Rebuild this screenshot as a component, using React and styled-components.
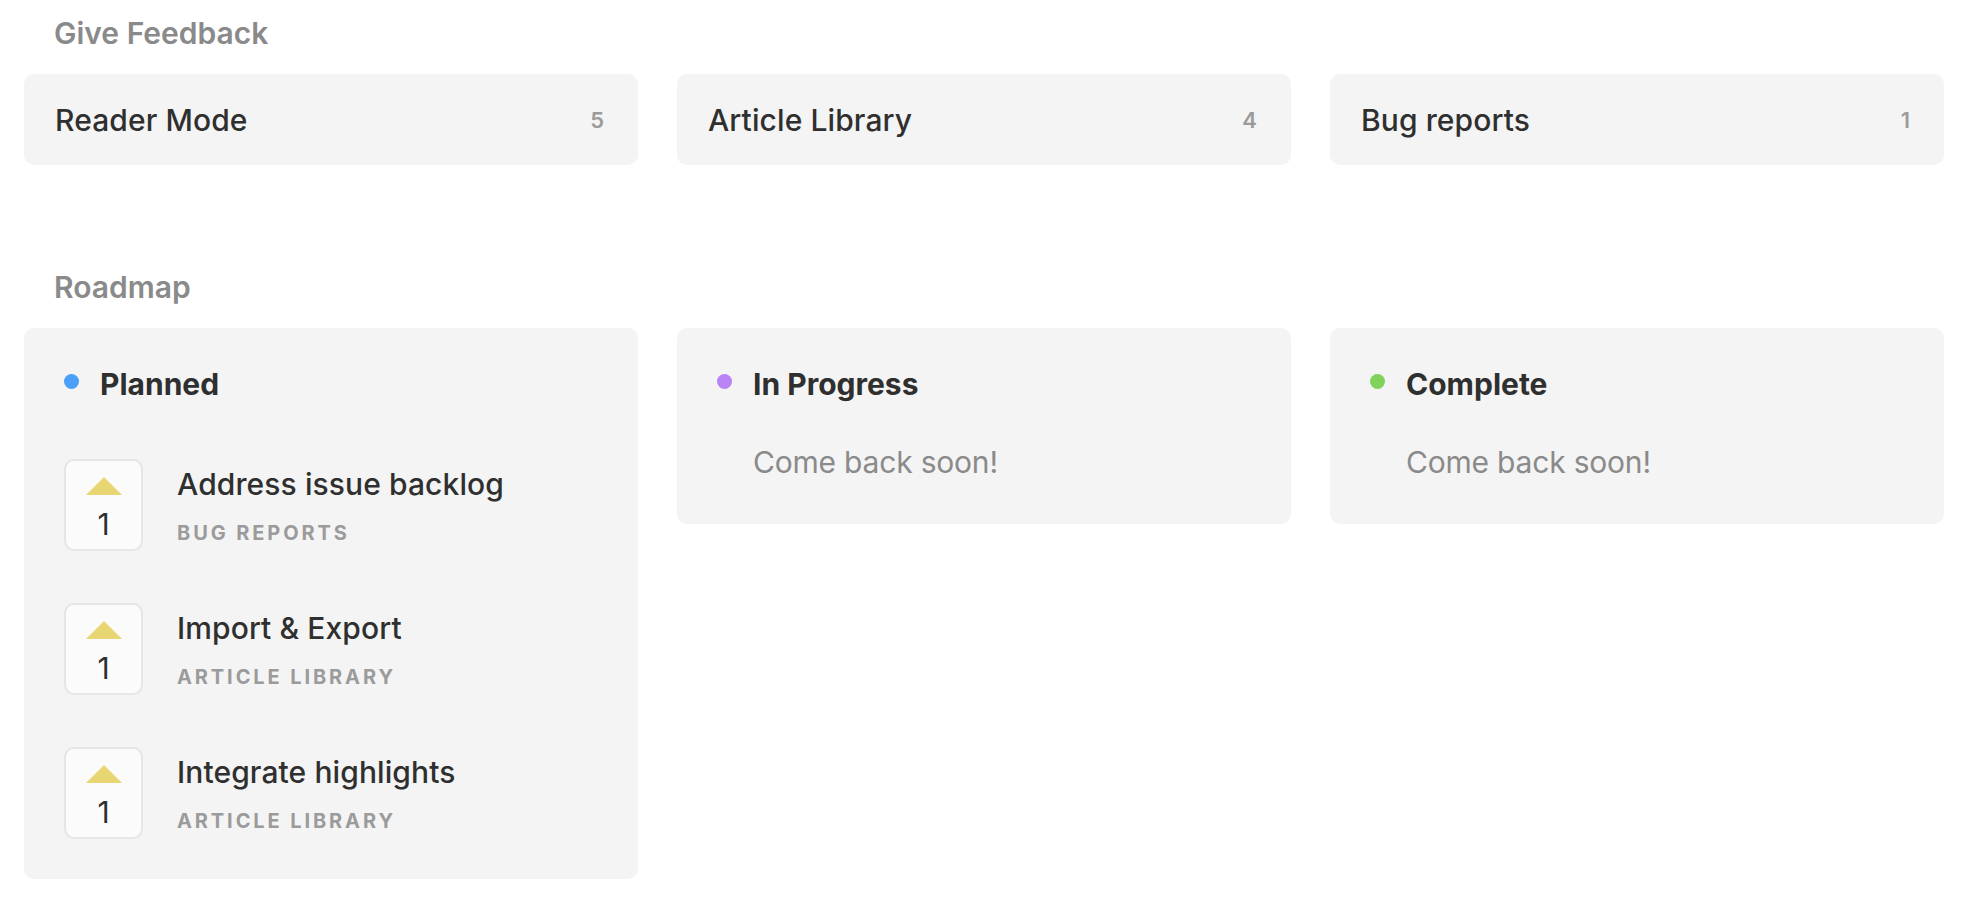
import React from 'react'
import styled, { createGlobalStyle } from 'styled-components'

const GlobalStyle = createGlobalStyle`
  body {
    margin: 0;
    background: #ffffff;
    font-family: Inter, 'Noto Sans', sans-serif;
    -webkit-font-smoothing: antialiased;
  }
`

const Page = styled.div`
  padding: 15px 36px 30px 24px;
`

const Section = styled.section`
  display: flex;
  flex-direction: column;
  & + & {
    margin-top: 104px;
  }
`

const SectionTitle = styled.h2`
  margin: 0 0 23px 30px;
  font-size: 30px;
  line-height: 36px;
  font-weight: 600;
  color: #8a8a8a;
`

const Columns = styled.div`
  display: grid;
  grid-template-columns: repeat(3, 1fr);
  column-gap: 39px;
  align-items: start;
`

const BoardCard = styled.div`
  height: 91px;
  padding: 0 34px 0 31px;
  display: flex;
  align-items: center;
  justify-content: space-between;
  background: #f4f4f4;
  border-radius: 10px;
`

const BoardName = styled.span`
  font-size: 30px;
  font-weight: 500;
  letter-spacing: 0.1px;
  color: #2f2f2f;
`

const BoardCount = styled.span`
  font-size: 22px;
  font-weight: 600;
  color: #9b9b9b;
`

const RoadmapCard = styled.div`
  padding: 38px 40px 40px 40px;
  background: #f4f4f4;
  border-radius: 10px;
`

const StatusHeader = styled.div`
  display: flex;
  align-items: center;
  gap: 21px;
`

const Dot = styled.span`
  width: 15px;
  height: 15px;
  border-radius: 50%;
  background: ${({ color }) => color};
  margin-top: -5px;
  flex: none;
`

const StatusName = styled.span`
  font-size: 30px;
  line-height: 36px;
  font-weight: 700;
  color: #2f2f2f;
`

const EmptyText = styled.p`
  margin: 42px 0 4px 36px;
  font-size: 30px;
  line-height: 36px;
  font-weight: 400;
  letter-spacing: -0.2px;
  color: #8a8a8a;
`

const PostList = styled.ul`
  list-style: none;
  margin: 57px 0 0;
  padding: 0;
  display: flex;
  flex-direction: column;
  gap: 52px;
`

const Post = styled.li`
  display: flex;
  align-items: flex-start;
  gap: 34px;
`

const VoteBox = styled.div`
  box-sizing: border-box;
  width: 79px;
  height: 92px;
  padding-top: 16px;
  display: flex;
  flex-direction: column;
  align-items: center;
  background: #fbfbfb;
  border: 2px solid #e6e6e6;
  border-radius: 10px;
  flex: none;
`

const Arrow = styled.span`
  width: 0;
  height: 0;
  border-left: 18px solid transparent;
  border-right: 18px solid transparent;
  border-bottom: 18px solid #e8d672;
`

const VoteCount = styled.span`
  margin-top: 11px;
  font-size: 30px;
  line-height: 36px;
  font-weight: 400;
  color: #2f2f2f;
`

const PostBody = styled.div`
  display: flex;
  flex-direction: column;
  padding-top: 7px;
`

const PostTitle = styled.span`
  font-size: 30px;
  line-height: 36px;
  font-weight: 500;
  letter-spacing: 0.1px;
  color: #2f2f2f;
`

const PostBoard = styled.span`
  margin-top: 19px;
  font-size: 20px;
  line-height: 24px;
  font-weight: 700;
  letter-spacing: 2.9px;
  text-transform: uppercase;
  color: #9b9b9b;
`

const boards = [
  { name: 'Reader Mode', count: 5 },
  { name: 'Article Library', count: 4 },
  { name: 'Bug reports', count: 1 },
]

const statuses = [
  {
    name: 'Planned',
    color: '#4a9ff7',
    posts: [
      { title: 'Address issue backlog', board: 'Bug reports', votes: 1 },
      { title: 'Import & Export', board: 'Article library', votes: 1 },
      { title: 'Integrate highlights', board: 'Article library', votes: 1 },
    ],
  },
  { name: 'In Progress', color: '#b883f5', posts: [] },
  { name: 'Complete', color: '#80d35a', posts: [] },
]

export default function App() {
  return (
    <Page>
      <GlobalStyle />
      <Section>
        <SectionTitle>Give Feedback</SectionTitle>
        <Columns>
          {boards.map(b => (
            <BoardCard key={b.name}>
              <BoardName>{b.name}</BoardName>
              <BoardCount>{b.count}</BoardCount>
            </BoardCard>
          ))}
        </Columns>
      </Section>
      <Section>
        <SectionTitle>Roadmap</SectionTitle>
        <Columns>
          {statuses.map(s => (
            <RoadmapCard key={s.name}>
              <StatusHeader>
                <Dot color={s.color} />
                <StatusName>{s.name}</StatusName>
              </StatusHeader>
              {s.posts.length === 0 ? (
                <EmptyText>Come back soon!</EmptyText>
              ) : (
                <PostList>
                  {s.posts.map(p => (
                    <Post key={p.title}>
                      <VoteBox>
                        <Arrow />
                        <VoteCount>{p.votes}</VoteCount>
                      </VoteBox>
                      <PostBody>
                        <PostTitle>{p.title}</PostTitle>
                        <PostBoard>{p.board}</PostBoard>
                      </PostBody>
                    </Post>
                  ))}
                </PostList>
              )}
            </RoadmapCard>
          ))}
        </Columns>
      </Section>
    </Page>
  )
}
